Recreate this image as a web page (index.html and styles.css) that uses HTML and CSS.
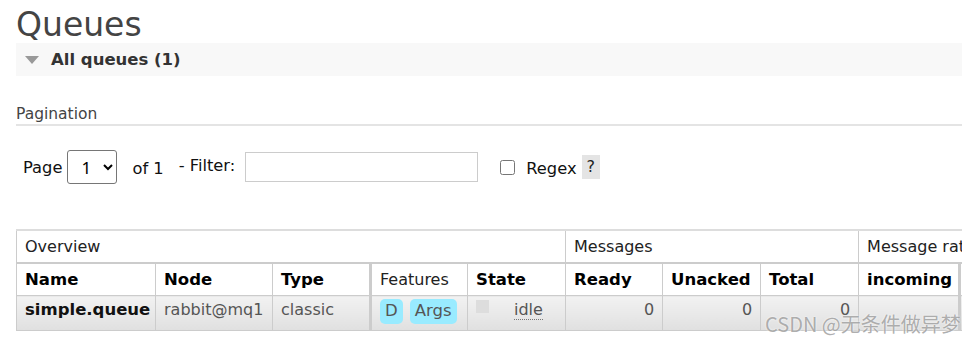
FILE: index.html
```html
<!DOCTYPE html>
<html lang="en">
<head>
  <meta charset="UTF-8">
  <title>Queues</title>
  <link rel="stylesheet" href="styles.css">
</head>
<body>
<div id="main">
  <h1>Queues</h1>
  <div class="section">
    <h2><span class="arrow"></span>All queues (1)</h2>
    <div class="hider">
      <h3>Pagination</h3>
      <div class="filter">
        <label class="lbl">Page</label>
        <select class="page-select"><option>1</option></select>
        <span class="lbl of">of 1</span>
        <label class="lbl filter-lbl">- Filter:</label>
        <input type="text" class="filter-input">
        <input type="checkbox" class="regex-box" id="regex">
        <label class="lbl regex-lbl" for="regex">Regex</label>
        <span class="help">?</span>
      </div>

      <div class="table-wrap">
        <table class="list">
          <colgroup>
            <col style="width:139px">
            <col style="width:117px">
            <col style="width:98px">
            <col style="width:97px">
            <col style="width:98px">
            <col style="width:97px">
            <col style="width:98px">
            <col style="width:98px">
            <col style="width:101px">
            <col style="width:100px">
          </colgroup>
          <thead>
            <tr class="group">
              <th colspan="5">Overview</th>
              <th colspan="3">Messages</th>
              <th colspan="2">Message rates</th>
            </tr>
            <tr class="cols">
              <th>Name</th>
              <th>Node</th>
              <th class="sep">Type</th>
              <th class="plain">Features</th>
              <th>State</th>
              <th>Ready</th>
              <th>Unacked</th>
              <th>Total</th>
              <th class="sep">incoming</th>
              <th>deliver / get</th>
            </tr>
          </thead>
          <tbody>
            <tr>
              <td class="qname">simple.queue</td>
              <td>rabbit@mq1</td>
              <td class="sep">classic</td>
              <td><span class="tag">D</span><span class="tag">Args</span></td>
              <td><span class="state-box"></span><abbr class="state">idle</abbr></td>
              <td class="num">0</td>
              <td class="num">0</td>
              <td class="num">0</td>
              <td class="sep"></td>
              <td></td>
            </tr>
          </tbody>
        </table>
      </div>
    </div>
  </div>
</div>
<div class="watermark">CSDN @无条件做异梦</div>
</body>
</html>
```

FILE: styles.css
```css
body {
  margin: 0;
  padding: 0 13px 0 16px;
  font-family: "DejaVu Sans", Verdana, sans-serif;
  color: #444;
  background: #fff;
}
#main { width: 946px; }
h1 {
  margin: 0;
  padding-top: 6px;
  height: 37px;
  font-size: 33px;
  font-weight: normal;
  line-height: 37px;
  color: #444;
}
.section h2 {
  margin: 0;
  height: 33px;
  display: flex;
  align-items: center;
  background: #f8f8f8;
  font-size: 16.5px;
  color: #333;
  padding-left: 9px;
}
.arrow {
  width: 0;
  height: 0;
  border-left: 7px solid transparent;
  border-right: 7px solid transparent;
  border-top: 8px solid #999;
  margin-right: 12px;
  margin-top: 1px;
}
.hider { padding-top: 25px; }
h3 {
  margin: 0;
  padding-top: 4px;
  font-size: 15.5px;
  line-height: 19px;
  font-weight: normal;
  color: #444;
  height: 19px;
  border-bottom: 2px solid #e4e4e4;
}
.filter {
  display: flex;
  align-items: center;
  height: 103px;
  padding-left: 7px;
  padding-bottom: 44px;
  box-sizing: border-box;
  padding-top: 23px;
  font-size: 16.3px;
  color: #111;
}
.lbl { white-space: nowrap; }
.page-select {
  margin-left: 5px;
  width: 50px;
  height: 34px;
  border: 1px solid #767676;
  border-radius: 3px;
  background: #fff;
  font-family: "Noto Sans", sans-serif;
  font-size: 17px;
  padding-left: 9px;
}
.of { margin-left: 15px; margin-top: 3px; }
.filter-lbl { margin-left: 15px; margin-bottom: 3px; }
.filter-input {
  margin: 0 0 0 10px;
  width: 233px;
  height: 30px;
  box-sizing: border-box;
  border: 1px solid #ccc;
}
.regex-box {
  margin: 0 0 0 22px;
  width: 15px;
  height: 15px;
}
.regex-lbl { margin-left: 11px; margin-top: 3px; }
.help {
  margin-left: 5px;
  background: #e4e4e4;
  padding: 0 5px;
  height: 24px;
  line-height: 24px;
  font-size: 16px;
  color: #222;
}
.table-wrap {
  overflow: hidden;
  width: 946px;
}
table.list {
  border-collapse: collapse;
  table-layout: fixed;
  width: 1043px;
  font-size: 16px;
}
table.list th, table.list td {
  border: 1px solid #ccc;
  padding: 0 8px;
  text-align: left;
  white-space: nowrap;
  overflow: hidden;
}
tr.group th {
  font-weight: normal;
  color: #222;
  height: 31px;
  border-bottom: 2px solid #ccc;
  border-top: 2px solid #ddd;
}
tr.cols th {
  color: #000;
  height: 31px;
  font-size: 16.5px;
}
tr.cols th.plain { font-weight: normal; color: #222; font-size: 16px; }
table.list .sep { border-right: 3px solid #ccc; }
tbody td {
  height: 31px;
  background: linear-gradient(#f2f2f2, #e0e0e0);
  color: #555;
  border-bottom: 2px solid #ccc;
}
table.list tbody td {
  vertical-align: top;
  padding-top: 3px;
  line-height: 22px;
}
table.list td.qname { font-weight: bold; color: #111; font-size: 16.5px; }
table.list td.num { text-align: right; }
.tag {
  display: inline-block;
  background: #99ebff;
  color: #555;
  border-radius: 5px;
  padding: 1px 5px 2px;
  margin-right: 7px;
  font-size: 16.5px;
}
.state-box {
  display: inline-block;
  width: 13px;
  height: 13px;
  background: #ddd;
  vertical-align: 2px;
  margin-right: 25px;
}
abbr.state {
  text-decoration: none;
  border-bottom: 1px dotted #777;
}
.watermark {
  position: absolute;
  left: 765px;
  top: 309px;
  font-family: "Noto Sans CJK SC", sans-serif;
  font-size: 20px;
  color: rgba(140, 140, 140, 0.7);
  text-shadow: 0 0 2px #fff;
}
```
